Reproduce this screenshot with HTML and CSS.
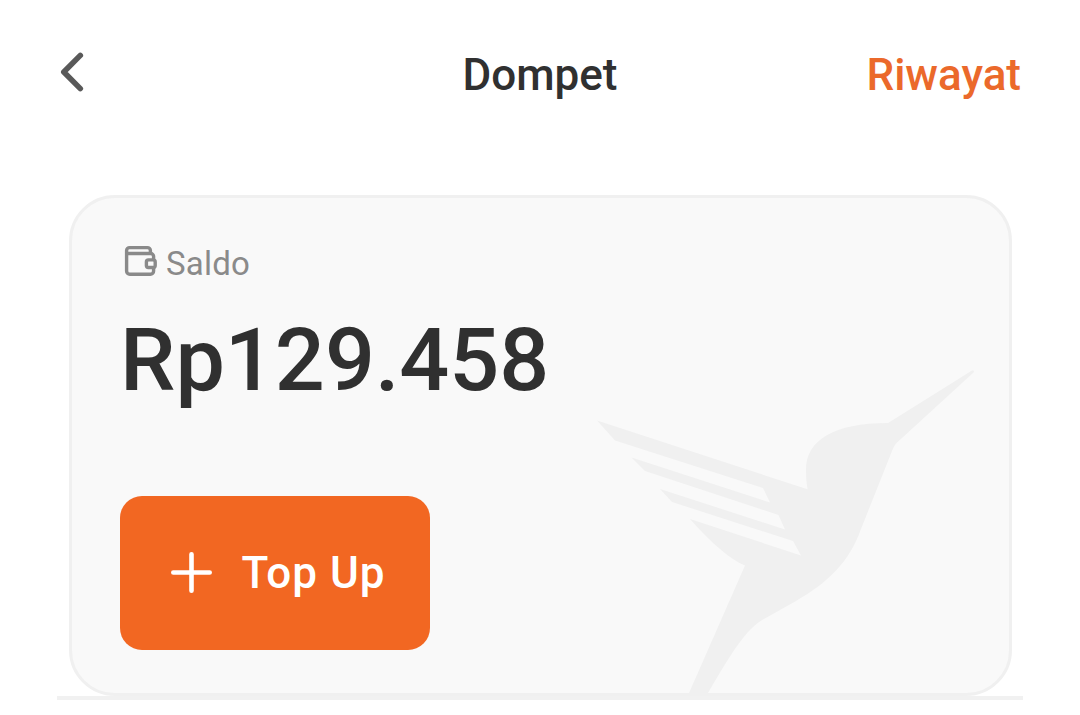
FILE: index.html
```html
<!DOCTYPE html>
<html lang="id">
<head>
    <meta charset="UTF-8">
    <meta name="viewport" content="width=device-width, initial-scale=1.0">
    <title>Dompet</title>
    <link rel="stylesheet" href="styles.css">
</head>
<body>
    <header class="header">
        <a href="#" class="back" aria-label="Kembali">
            <svg width="24" height="40" viewBox="0 0 24 40">
                <path d="M20.3 3.4 3.8 20l16.5 16.6" fill="none" stroke="currentColor" stroke-width="5.6" stroke-linecap="round" stroke-linejoin="round"/>
            </svg>
        </a>
        <h1 class="title">Dompet</h1>
        <a href="#" class="history">Riwayat</a>
    </header>

    <main class="content">
        <section class="card">
            <svg class="bird" width="378" height="323" viewBox="598 370 378 323">
                <path d="M598 420.5 808.5 489.3C807.5 483 807 477 807 470C807 440 835 423 889 423L973 370.5Q976 370 974.5 372.5L897 443.5Q895 446 893 451L862 529C850 563 828 583 797 601L765 619C747 629 733 652 709 693H690L746 565.5C728 558 708 538 691 519L802 555.500 794 541 673 502 661 489 786 529.500 779.500 515 646 471 632.500 457.500 771 502.500 764 488 616 440.500Z"/>
            </svg>
            <div class="label">
                <svg width="33" height="32" viewBox="0 0 33 32" fill="none" stroke="currentColor" stroke-width="3.4" stroke-linejoin="round">
                    <path d="M26.4 8.5V5.600a3 3 0 0 0-3-3H5.600a3 3 0 0 0-3 3V26a3.200 3.200 0 0 0 3.200 3.200h20.600a3.200 3.200 0 0 0 3.200-3.200v-3M2.600 8.500h24a3 3 0 0 1 3 3v3.200"/>
                    <rect x="22.400" y="14.900" width="8.800" height="7.600" rx="2"/>
                </svg>
                <span>Saldo</span>
            </div>
            <div class="amount">Rp129.458</div>
            <button type="button" class="topup">
                <svg width="41" height="41" viewBox="0 0 41 41">
                    <path d="M20.5 2.300v36.400M2.300 20.500h36.400" stroke="currentColor" stroke-width="4.600" stroke-linecap="round"/>
                </svg>
                <span>Top Up</span>
            </button>
        </section>
    </main>
</body>
</html>
```
FILE: styles.css
```css
* {
    box-sizing: border-box;
}
body {
    font-family: Roboto, sans-serif;
    margin: 0;
    background-color: #fff;
    color: #303030;
}
a {
    text-decoration: none;
}
svg {
    display: block;
    flex-shrink: 0;
}
.header {
    display: grid;
    grid-template-columns: 1fr auto 1fr;
    align-items: center;
    height: 150px;
    padding: 0 60px;
}
.back {
    color: #595959;
    margin-top: -6px;
}
.title, .history {
    margin: 0;
    font-size: 44px;
    font-weight: 500;
    line-height: 52px;
}
.history {
    justify-self: end;
    margin-right: -1px;
    color: #eb692b;
}
.content {
    margin: 45px 57px 0;
    padding: 0 11px 0 12px;
    border-bottom: 4px solid #f1f1f1;
}
.card {
    position: relative;
    height: 501px;
    padding: 46px 48px;
    background-color: #f9f9f9;
    border: 3px solid #f0f0f0;
    border-radius: 46px;
}
.bird {
    position: absolute;
    right: 34px;
    bottom: 0;
    fill: #f0f0f0;
}
.label {
    display: flex;
    align-items: center;
    gap: 9px;
    height: 40px;
    padding-left: 4px;
    color: #8a8a8a;
    font-size: 33px;
    letter-spacing: 0.2px;
    line-height: 40px;
}
.label svg {
    margin-top: -6px;
}
.amount {
    margin-top: 24px;
    font-size: 88px;
    font-weight: 500;
    line-height: 104px;
}
.topup {
    display: flex;
    align-items: center;
    gap: 29.5px;
    width: 310px;
    height: 154px;
    margin-top: 84px;
    padding: 0 0 0 51px;
    border: none;
    border-radius: 22px;
    background-color: #f26722;
    color: #fff;
    font-family: inherit;
    font-size: 44px;
    font-weight: 500;
    letter-spacing: 1px;
    cursor: pointer;
}
.topup svg {
    margin-top: -2px;
}
```
